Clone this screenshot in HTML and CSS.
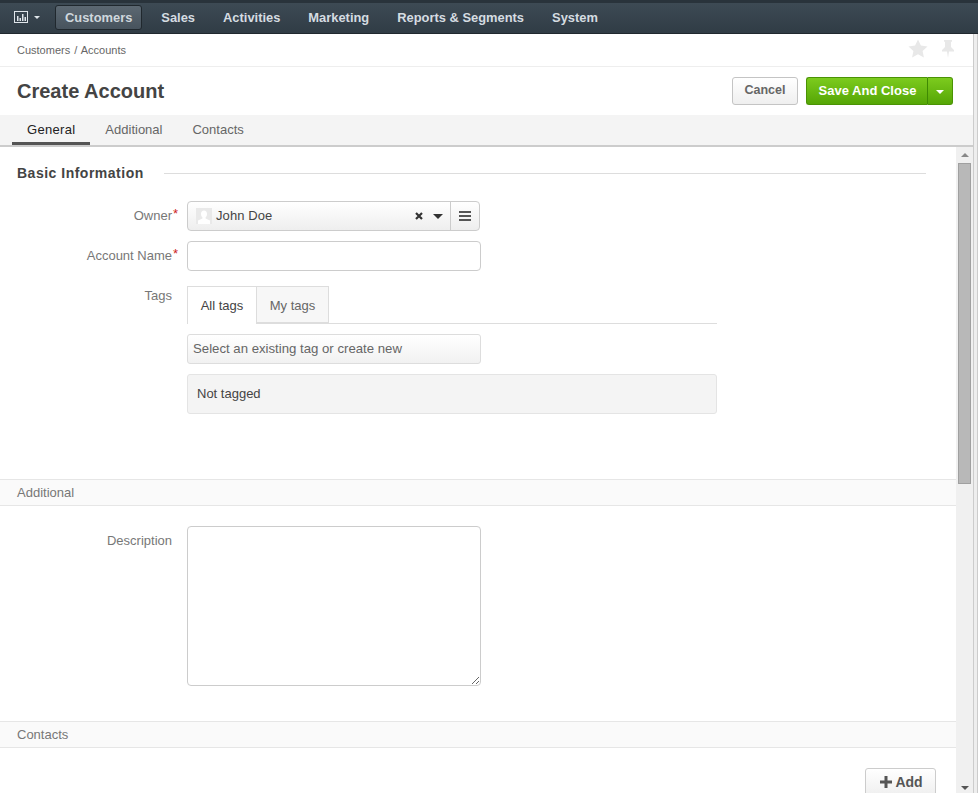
FILE: index.html
```html
<!DOCTYPE html>
<html lang="en">

<head>
    <meta charset="UTF-8">
    <title>Create Account</title>
    <link rel="stylesheet" href="styles.css">
</head>

<body>
    <div class="topstrip"></div>
    <nav class="menu">
        <a class="menu-dash">
            <svg width="14" height="12" viewBox="0 0 14 12"><rect x="0.5" y="0.5" width="13" height="11" fill="none" stroke="#dfe5ea"/><path d="M3 5h1.500v5H3zM5.500 7H7v3H5.500zM8 3h1.500v7H8zM10.500 6H12v4h-1.500z" fill="#dfe5ea"/></svg>
            <i class="caret-sm"></i>
        </a>
        <a class="menu-item active">Customers</a>
        <a class="menu-item">Sales</a>
        <a class="menu-item">Activities</a>
        <a class="menu-item">Marketing</a>
        <a class="menu-item">Reports &amp; Segments</a>
        <a class="menu-item">System</a>
    </nav>

    <div class="page-row">
        <div class="page">
            <div class="crumbs">
                <span>Customers / Accounts</span>
                <div class="crumb-icons">
                    <svg width="20" height="19" viewBox="0 0 20 19"><path d="M10 0.500l2.900 6.100 6.600.8-4.900 4.500 1.300 6.600-5.900-3.300-5.900 3.300 1.300-6.600L.5 7.400l6.600-.8z" fill="#e8e8e8"/></svg>
                    <svg width="14" height="19" viewBox="0 0 14 19"><path d="M3 1h8v1.500L10 3v5l3 3v1.500H8L7 19l-1-6.500H1V11l3-3V3L3 2.500z" fill="#e8e8e8"/></svg>
                </div>
            </div>

            <header class="title-bar">
                <h1>Create Account</h1>
                <div class="title-actions">
                    <button class="btn">Cancel</button>
                    <div class="btn-group">
                        <button class="btn-save">Save And Close</button>
                        <button class="btn-save-caret"><i class="caret-sm"></i></button>
                    </div>
                </div>
            </header>

            <div class="tabs">
                <a class="tab active">General</a>
                <a class="tab">Additional</a>
                <a class="tab">Contacts</a>
            </div>

            <div class="content-wrap">
                <main class="content">
                    <div class="section-head">
                        <h2>Basic Information</h2>
                        <div class="section-line"></div>
                    </div>

                    <div class="row row-owner">
                        <label>Owner<em>*</em></label>
                        <div class="owner-select">
                            <div class="owner-value">
                                <svg class="avatar" width="16" height="16" viewBox="0 0 16 16"><rect width="16" height="16" fill="#e9e9e9"/><path d="M8 2.500c1.900 0 3 1.500 3 3.500 0 1.400-.6 2.600-1.400 3.300v1.200L14 12.500V16H2v-3.500l4.400-2V9.300C5.600 8.600 5 7.400 5 6c0-2 1.100-3.500 3-3.500z" fill="#fff"/></svg>
                                <span class="owner-name">John Doe</span>
                                <svg class="owner-clear" width="8" height="8" viewBox="0 0 8 8"><path d="M1 1l6 6M7 1L1 7" stroke="#333" stroke-width="2.200" fill="none"/></svg>
                                <i class="caret-dark"></i>
                            </div>
                            <div class="owner-menu">
                                <svg width="12" height="10" viewBox="0 0 12 10"><path d="M0 0h12v2H0zM0 4h12v2H0zM0 8h12v2H0z" fill="#555"/></svg>
                            </div>
                        </div>
                    </div>

                    <div class="row row-name">
                        <label>Account Name<em>*</em></label>
                        <input class="input" type="text">
                    </div>

                    <div class="row row-tags">
                        <label class="tags-label">Tags</label>
                        <div class="tags">
                            <div class="tag-tabs">
                                <a class="tag-tab active">All tags</a>
                                <a class="tag-tab">My tags</a>
                            </div>
                            <div class="tag-select">Select an existing tag or create new</div>
                            <div class="tag-box">Not tagged</div>
                        </div>
                    </div>

                    <div class="sub-head sub-additional">Additional</div>

                    <div class="row row-desc">
                        <label>Description</label>
                        <textarea class="textarea"></textarea>
                    </div>

                    <div class="sub-head sub-contacts">Contacts</div>

                    <div class="add-row">
                        <button class="btn-add">
                            <svg class="plus" width="12" height="12" viewBox="0 0 12 12"><path d="M4.500 0h3v4.500H12v3H7.500V12h-3V7.500H0v-3h4.500z" fill="#555"/></svg>Add
                        </button>
                    </div>
                </main>

                <div class="scrollbar">
                    <div class="arrow-up"></div>
                    <div class="thumb"></div>
                    <div class="arrow-down"></div>
                </div>
            </div>
        </div>
        <div class="side-strip"></div>
    </div>
</body>
</html>
```

FILE: styles.css
```css
* {
    box-sizing: border-box;
}

body {
    margin: 0;
    height: 793px;
    overflow: hidden;
    background-color: #fff;
    color: #444;
    font-family: 'Liberation Sans', Arial, sans-serif;
    font-size: 13px;
    display: flex;
    flex-direction: column;
}

.topstrip {
    height: 3px;
    background-color: #29333b;
}

.menu {
    height: 31px;
    background: linear-gradient(#3d4a54, #303c45);
    border-bottom: 1px solid #20282e;
    display: flex;
    align-items: center;
    padding: 0 0 2px 14px;
}

.menu-dash {
    display: flex;
    align-items: center;
    gap: 6px;
    width: 41px;
}

.caret-sm {
    display: inline-block;
    width: 0;
    height: 0;
    border-left: 4px solid transparent;
    border-right: 4px solid transparent;
    border-top: 4px solid #fff;
}

.menu-dash .caret-sm {
    border-left-width: 3px;
    border-right-width: 3px;
    border-top: 3px solid #dfe5ea;
}

.menu-item {
    color: #d5dce1;
    font-weight: bold;
    font-size: 12.900px;
    height: 25px;
    line-height: 23px;
    padding: 0 9px;
    margin-right: 8px;
    border: 1px solid transparent;
    border-radius: 3px;
}

.menu-item.active {
    margin-right: 9px;
    background: linear-gradient(#5c6872, #47535d);
    border-color: #20282e;
    color: #cfd7dd;
}

.page-row {
    flex: 1;
    display: flex;
    min-height: 0;
}

.page {
    flex: 1;
    min-width: 0;
    display: flex;
    flex-direction: column;
}

.side-strip {
    width: 5px;
    background-color: #eee;
    border-left: 1px solid #ccc;
    border-right: 1px solid #ccc;
}

.crumbs {
    height: 33px;
    padding: 0 18px 0 17px;
    border-bottom: 1px solid #eee;
    display: flex;
    align-items: center;
    justify-content: space-between;
    font-size: 11px;
    word-spacing: 1px;
    color: #666;
}

.crumb-icons {
    display: flex;
    align-items: center;
    gap: 13px;
    padding-bottom: 3px;
}

.title-bar {
    height: 48px;
    padding: 0 20px 0 17px;
    display: flex;
    align-items: center;
    justify-content: space-between;
}

h1 {
    margin: 0;
    font-size: 20px;
    color: #444;
}

.title-actions {
    display: flex;
    gap: 8px;
}

.btn {
    width: 66px;
    height: 28px;
    padding: 0 0 2px;
    background: linear-gradient(#fff, #efefef);
    border: 1px solid #c4c4c4;
    border-radius: 3px;
    color: #666;
    font: bold 12.500px 'Liberation Sans', Arial, sans-serif;
}

.btn-group {
    display: flex;
}

.btn-save,
.btn-save-caret {
    height: 28px;
    background: linear-gradient(#7ccb1e, #55a606);
    border: 1px solid #4a9304;
    color: #fff;
    font: bold 13px 'Liberation Sans', Arial, sans-serif;
}

.btn-save {
    width: 122px;
    padding: 0 0 2px 1px;
    border-radius: 3px 0 0 3px;
    border-right-color: #3f8a03;
}

.btn-save-caret {
    width: 25px;
    border-left: 0;
    border-radius: 0 3px 3px 0;
    padding: 0 0 3px;
}

.tabs {
    height: 32px;
    background-color: #f4f4f4;
    border-bottom: 2px solid #ccc;
    display: flex;
    padding-left: 12px;
}

.tab {
    padding: 0 15px;
    line-height: 29px;
    color: #666;
    height: 30px;
}

.tab.active {
    color: #222;
    letter-spacing: 0.3px;
    border-bottom: 3px solid #555;
}

.content-wrap {
    flex: 1;
    display: flex;
    min-height: 0;
}

.content {
    flex: 1;
    min-width: 0;
    overflow: hidden;
}

.section-head {
    display: flex;
    align-items: center;
    padding: 15px 30px 0 17px;
    height: 37px;
}

h2 {
    margin: 0 20px 0 0;
    font-size: 14px;
    font-weight: bold;
    letter-spacing: 0.5px;
    color: #444;
}

.section-line {
    flex: 1;
    height: 1px;
    background-color: #ddd;
}

.row {
    display: flex;
    align-items: flex-start;
}

.row label {
    position: relative;
    width: 172px;
    margin-right: 15px;
    padding-top: 7px;
    flex-shrink: 0;
    text-align: right;
    color: #777;
}

.row em {
    position: absolute;
    left: 100%;
    top: 5px;
    margin-left: 1px;
    color: #c22;
    font-style: normal;
}

.row-owner {
    margin-top: 17px;
}

.owner-select {
    width: 293px;
    height: 30px;
    display: flex;
    border: 1px solid #ccc;
    border-radius: 4px;
    background: linear-gradient(#fff, #eee);
}

.owner-value {
    flex: 1;
    display: flex;
    align-items: center;
    padding: 0 7px 0 8px;
    color: #444;
}

.owner-name {
    padding-bottom: 2px;
    letter-spacing: 0.1px;
}

.avatar {
    margin-right: 4px;
}

.owner-clear {
    margin-left: auto;
    margin-right: 10px;
}

.caret-dark {
    width: 0;
    height: 0;
    border-left: 5px solid transparent;
    border-right: 5px solid transparent;
    border-top: 5px solid #333;
}

.owner-menu {
    width: 29px;
    border-left: 1px solid #ccc;
    display: flex;
    align-items: center;
    justify-content: center;
}

.row-name {
    margin-top: 10px;
}

.input {
    width: 294px;
    height: 30px;
    border: 1px solid #ccc;
    border-radius: 4px;
    background-color: #fff;
}

.row-tags {
    margin-top: 15px;
}

.row .tags-label {
    padding-top: 2px;
}

.tags {
    width: 530px;
}

.tag-tabs {
    display: flex;
    height: 38px;
    border-bottom: 1px solid #ddd;
}

.tag-tab {
    width: 72px;
    line-height: 37px;
    text-align: center;
    color: #666;
    background-color: #f7f7f7;
    border: 1px solid #ddd;
    border-left: 0;
}

.tag-tab.active {
    width: 70px;
    height: 38px;
    color: #444;
    background-color: #fff;
    border-left: 1px solid #ddd;
    border-bottom: 0;
}

.tag-select {
    width: 294px;
    height: 30px;
    margin-top: 10px;
    border: 1px solid #ddd;
    border-radius: 3px;
    background: linear-gradient(#fff, #f1f1f1);
    line-height: 28px;
    padding-left: 5px;
    font-size: 13.200px;
    color: #666;
}

.tag-box {
    height: 40px;
    margin-top: 10px;
    border: 1px solid #e4e4e4;
    border-radius: 3px;
    background-color: #f4f4f4;
    line-height: 38px;
    padding-left: 9px;
    color: #444;
}

.sub-head {
    height: 27px;
    background-color: #fafafa;
    border-top: 1px solid #e6e6e6;
    border-bottom: 1px solid #e6e6e6;
    padding-left: 17px;
    line-height: 26px;
    color: #777;
}

.sub-additional {
    margin-top: 65px;
}

.row-desc {
    margin-top: 20px;
}

.row-desc label {
    padding-top: 7px;
}

.textarea {
    width: 294px;
    height: 160px;
    border: 1px solid #ccc;
    border-radius: 4px;
}

.sub-contacts {
    margin-top: 35px;
}

.add-row {
    display: flex;
    justify-content: flex-end;
    padding: 20px 20px 0 0;
}

.btn-add {
    width: 71px;
    height: 30px;
    background: linear-gradient(#fff, #eee);
    border: 1px solid #ccc;
    border-radius: 3px;
    color: #555;
    font: bold 14px 'Liberation Sans', Arial, sans-serif;
    padding: 0 0 2px 2px;
}

.plus {
    margin-right: 3px;
    vertical-align: -1px;
}

.scrollbar {
    width: 17px;
    background-color: #f0f0f0;
    position: relative;
}

.thumb {
    position: absolute;
    left: 2px;
    top: 16px;
    width: 13px;
    height: 321px;
    background-color: #b8b8b8;
    border: 1px solid #a0a0a0;
}

.arrow-up,
.arrow-down {
    position: absolute;
    left: 5px;
    width: 0;
    height: 0;
    border-left: 4px solid transparent;
    border-right: 4px solid transparent;
}

.arrow-up {
    top: 6px;
    border-bottom: 4px solid #888;
}

.arrow-down {
    bottom: 3px;
    border-top: 4px solid #555;
}
```
